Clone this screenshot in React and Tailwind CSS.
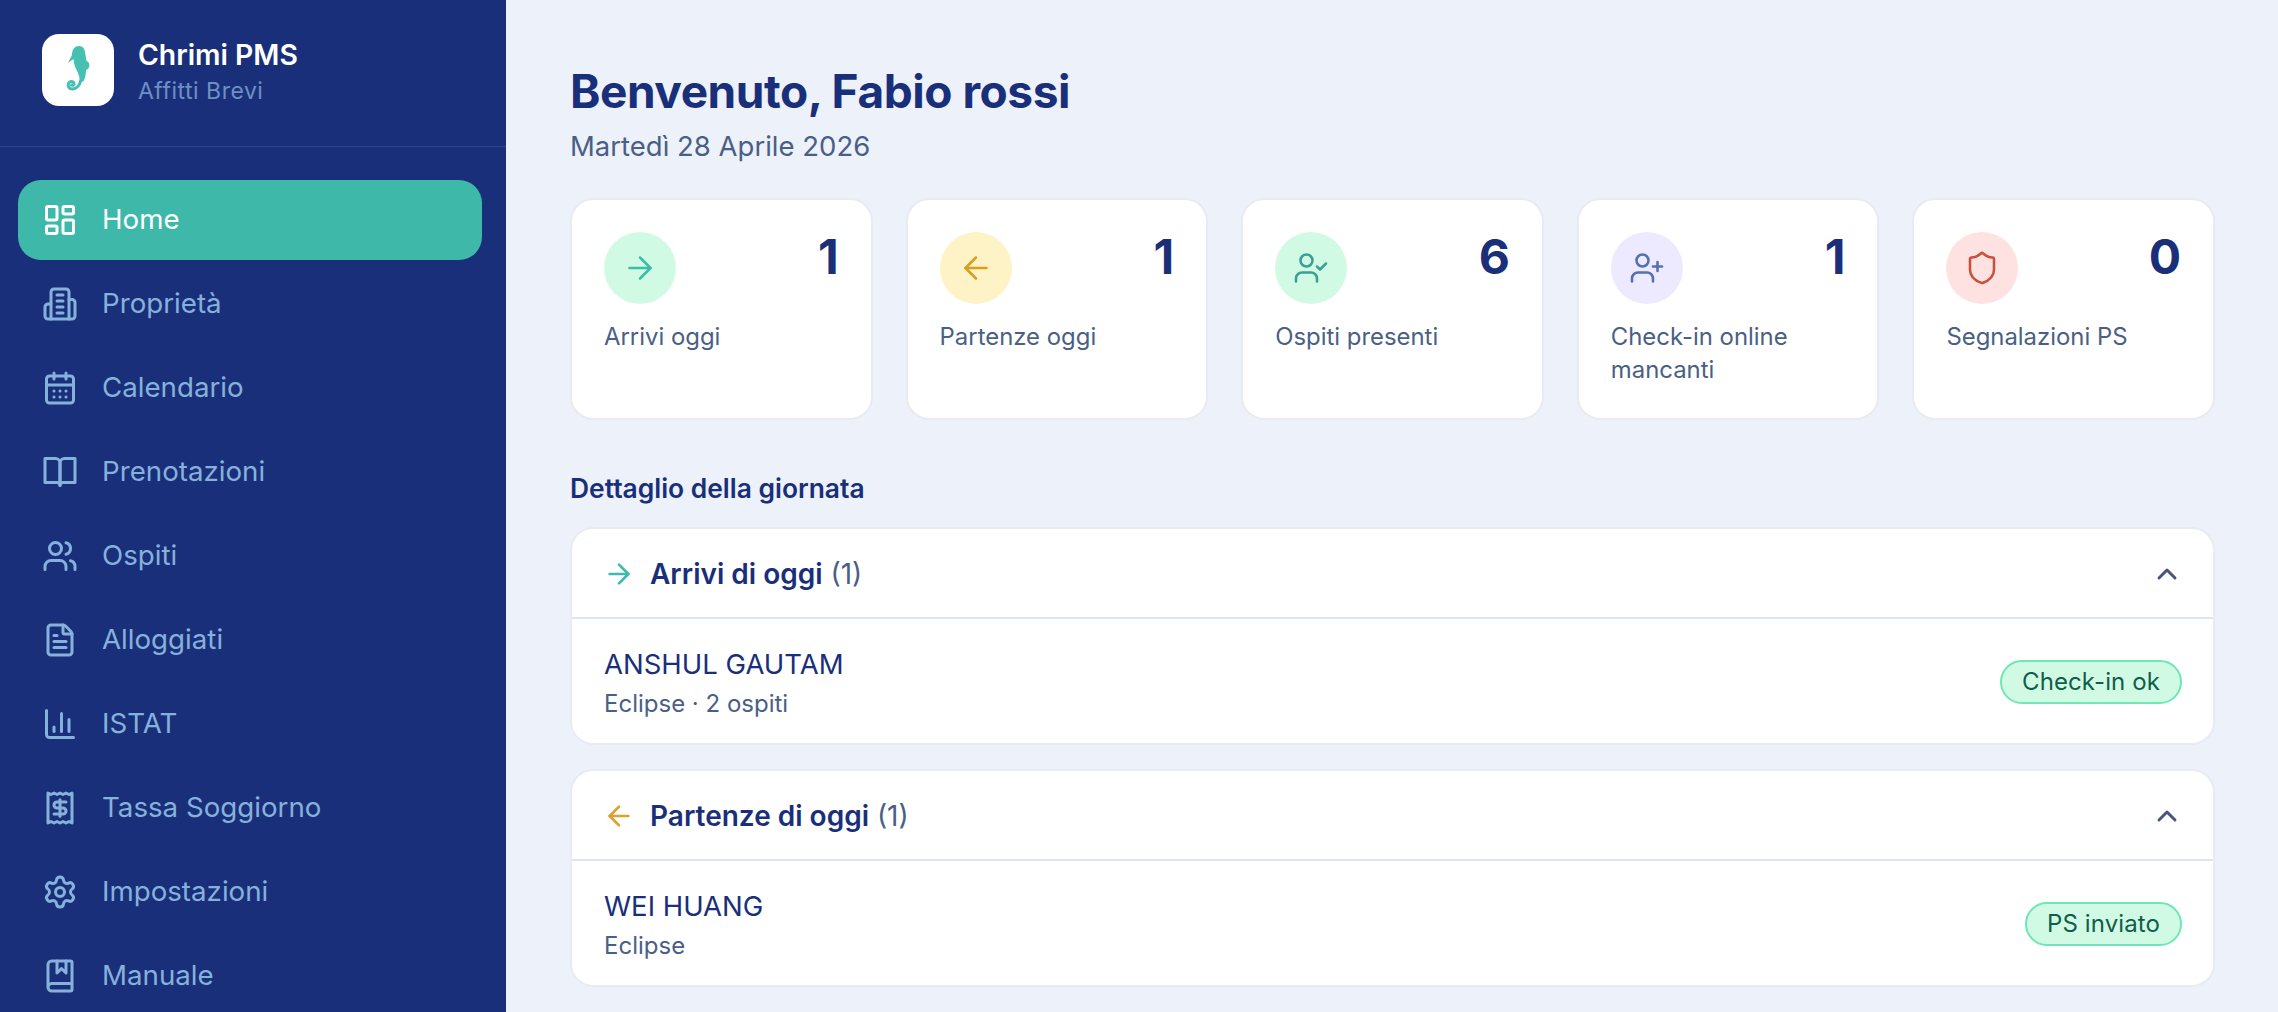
import {
  ArrowLeft,
  ArrowRight,
  BookMarked,
  ChartColumn,
  ChevronUp,
  FileText,
  LayoutDashboard,
  Receipt,
  Settings,
  Shield,
  UserCheck,
  UserPlus,
  Users,
} from 'lucide-react'

const font = { fontFamily: 'Inter, "Liberation Sans", sans-serif' }

function Seahorse() {
  return (
    <svg viewBox="0 0 72 72" className="w-[72px] h-[72px]">
      <path
        fill="#46c0b2"
        d="M26 29 L30 21 C30 15 33 12 37 12 C41 12 43 15 43 19 C44 22 44 24 44 26 L47 29 C48 32 47 35 44 36 C44 41 43 45 41 48 C38 46 37 42 36 39 C34 35 33 33 32 29 L31.5 25 Z"
      />
      <path
        fill="none"
        stroke="#46c0b2"
        strokeWidth="3"
        strokeLinecap="round"
        d="M39 41 C40 47 37 54 31 55 C27 55.5 25.5 52 26.5 49.5 C27.5 47 31 47 32 49 C32.5 50.5 31 52 29.5 51"
      />
    </svg>
  )
}

function IconBuilding() {
  return (
    <svg viewBox="0 0 24 24" fill="none" stroke="currentColor" strokeWidth="2" strokeLinecap="round" strokeLinejoin="round" className="w-9 h-9 shrink-0">
      <path d="M6 22V4a2 2 0 0 1 2-2h8a2 2 0 0 1 2 2v18Z" />
      <path d="M6 12H4a2 2 0 0 0-2 2v6a2 2 0 0 0 2 2h2" />
      <path d="M18 9h2a2 2 0 0 1 2 2v9a2 2 0 0 1-2 2h-2" />
      <path d="M10 6h4M10 10h4M10 14h4M10 18h4" />
    </svg>
  )
}

function IconCalendar() {
  return (
    <svg viewBox="0 0 24 24" fill="none" stroke="currentColor" strokeWidth="2" strokeLinecap="round" strokeLinejoin="round" className="w-9 h-9 shrink-0">
      <rect x="3" y="4" width="18" height="18" rx="2" />
      <path d="M8 2v4M16 2v4M3 10h18" />
      <path d="M8 14h.01M12 14h.01M16 14h.01M8 18h.01M12 18h.01M16 18h.01" />
    </svg>
  )
}

function IconBook() {
  return (
    <svg viewBox="0 0 24 24" fill="none" stroke="currentColor" strokeWidth="2" strokeLinecap="round" strokeLinejoin="round" className="w-9 h-9 shrink-0">
      <path d="M2 3h7a3 3 0 0 1 3 3v15a2 2 0 0 0-2-2H2z" />
      <path d="M22 3h-7a3 3 0 0 0-3 3v15a2 2 0 0 1 2-2h8z" />
    </svg>
  )
}

const nav = [
  { label: 'Home', Icon: LayoutDashboard, active: true },
  { label: 'Proprietà', Icon: IconBuilding },
  { label: 'Calendario', Icon: IconCalendar },
  { label: 'Prenotazioni', Icon: IconBook },
  { label: 'Ospiti', Icon: Users },
  { label: 'Alloggiati', Icon: FileText },
  { label: 'ISTAT', Icon: ChartColumn },
  { label: 'Tassa Soggiorno', Icon: Receipt },
  { label: 'Impostazioni', Icon: Settings },
  { label: 'Manuale', Icon: BookMarked },
]

const stats = [
  { label: 'Arrivi oggi', value: 1, Icon: ArrowRight, circle: 'bg-[#d1fae5]', icon: 'text-[#3dbbab]' },
  { label: 'Partenze oggi', value: 1, Icon: ArrowLeft, circle: 'bg-[#fef3c7]', icon: 'text-[#d99f1c]' },
  { label: 'Ospiti presenti', value: 6, Icon: UserCheck, circle: 'bg-[#d1fae5]', icon: 'text-[#3a9f94]' },
  { label: 'Check-in online mancanti', value: 1, Icon: UserPlus, circle: 'bg-[#ede9fe]', icon: 'text-[#5570ae]' },
  { label: 'Segnalazioni PS', value: 0, Icon: Shield, circle: 'bg-[#fee2e2]', icon: 'text-[#c8503c]' },
]

const sections = [
  { title: 'Arrivi di oggi', Icon: ArrowRight, color: 'text-[#3dbbab]', name: 'ANSHUL GAUTAM', sub: 'Eclipse · 2 ospiti', badge: 'Check-in ok' },
  { title: 'Partenze di oggi', Icon: ArrowLeft, color: 'text-[#e0a030]', name: 'WEI HUANG', sub: 'Eclipse', badge: 'PS inviato' },
]

export default function App() {
  return (
    <div className="flex h-[1012px] overflow-hidden bg-[#edf1fa]" style={font}>
      {/* Sidebar */}
      <aside className="w-[506px] shrink-0 bg-[#1a2f7a]">
        <div className="flex items-start gap-6 h-[147px] pl-[42px] pt-[34px] border-b border-[#2f4486]">
          <div className="w-[72px] h-[72px] rounded-[17px] bg-white overflow-hidden">
            <Seahorse />
          </div>
          <div className="pt-[3px]">
            <p className="text-[28.3px] leading-[36px] font-semibold text-white">Chrimi PMS</p>
            <p className="text-[23px] leading-[36px] tracking-[0.5px] text-[#6d8fc4]">Affitti Brevi</p>
          </div>
        </div>
        <nav className="flex flex-col gap-1 pl-[18px] pr-6 pt-[33px]">
          {nav.map(({ label, Icon, active }) => (
            <div
              key={label}
              className={`flex items-center gap-6 h-[80px] pl-6 rounded-[23px] text-[27.7px] ${active ? 'bg-[#3eb8a9] text-white' : 'text-[#86b1da]'}`}
            >
              <Icon className="w-9 h-9 shrink-0" strokeWidth={2} />
              <span>{label}</span>
            </div>
          ))}
        </nav>
      </aside>

      {/* Main */}
      <main className="flex-1 pl-16 pr-[63px] pt-[62px]">
        <h1 className="text-[46px] leading-[58px] font-bold tracking-[-0.45px] text-[#1a2f7a]">Benvenuto, Fabio rossi</h1>
        <p className="text-[27.5px] leading-[40px] mt-[6px] text-[#4a5f85]">Martedì 28 Aprile 2026</p>

        <div className="grid grid-cols-5 gap-[33px] mt-[32px]">
          {stats.map(({ label, value, Icon, circle, icon }) => (
            <div key={label} className="h-[222px] rounded-[23px] border-2 border-[#e8ebf1] bg-white pl-[32px] pr-[32px] pt-[32px]">
              <div className="flex justify-between">
                <div className={`flex items-center justify-center w-[72px] h-[72px] rounded-full ${circle} ${icon}`}>
                  <Icon className="w-9 h-9" strokeWidth={1.7} />
                </div>
                <span className="text-[48px] leading-[50px] font-bold text-[#1a2f7a]">{value}</span>
              </div>
              <p className="text-[23.9px] leading-[33px] mt-[16px] text-[#4a5f85]">{label}</p>
            </div>
          ))}
        </div>

        <h2 className="text-[26.4px] leading-[36px] font-semibold text-[#1a2f7a] mt-[50px]">Dettaglio della giornata</h2>

        <div className="flex flex-col gap-6 mt-[21px]">
          {sections.map(({ title, Icon, color, name, sub, badge }) => (
            <section key={title} className="h-[218px] rounded-[23px] border-2 border-[#e8ebf1] bg-white overflow-hidden">
              <div className="flex items-center justify-between h-[90px] pt-[1px] pl-[31px] pr-[30px] border-b-2 border-[#dbe6f4]">
                <div className="flex items-center gap-[15px]">
                  <Icon className={`w-8 h-8 ${color}`} strokeWidth={2} />
                  <p className="text-[28px] text-[#4a5f85]">
                    <span className="font-semibold text-[#1a2f7a]">{title}</span> (1)
                  </p>
                </div>
                <ChevronUp className="w-8 h-8 text-[#46557f]" strokeWidth={2.2} />
              </div>
              <div className="flex items-center justify-between pl-[32px] pr-[31px] pt-[25px]">
                <div>
                  <p className="text-[27.5px] leading-[40px] text-[#1a2f7a]">{name}</p>
                  <p className="text-[24px] leading-[33px] mt-[3px] text-[#4a5f85]">{sub}</p>
                </div>
                <span className="rounded-full border-2 border-[#6ee7b7] bg-[#d1fae5] px-[20px] h-[44px] leading-[39px] text-[24px] tracking-[0.1px] text-[#0f5e4a]">
                  {badge}
                </span>
              </div>
            </section>
          ))}
        </div>
      </main>
    </div>
  )
}
